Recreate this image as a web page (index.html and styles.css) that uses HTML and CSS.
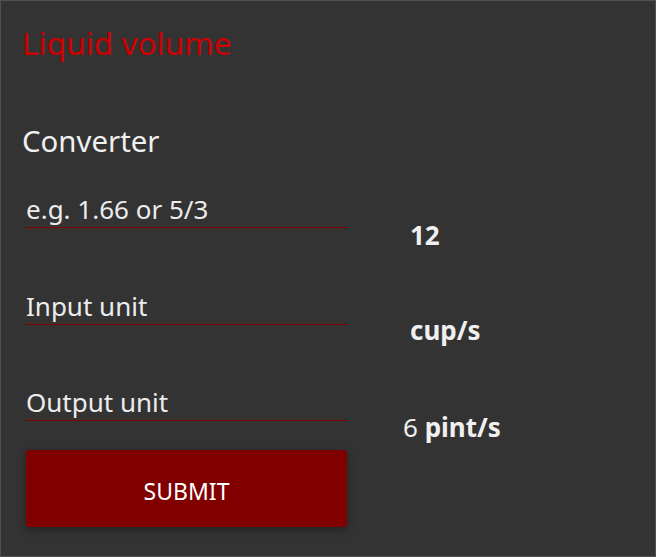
FILE: index.html
```html
<!DOCTYPE html>
<html>
<head>
<meta charset="utf-8">
<link rel="stylesheet" href="styles.css">
</head>
<body>
<div class="app">
  <h1 class="title">Liquid volume</h1>
  <h2 class="subtitle">Converter</h2>
  <div class="grid">
    <div class="field"><span class="placeholder">e.g. 1.66 or 5/3</span></div>
    <div class="value value-1 indent"><b>12</b></div>
    <div class="field"><span class="placeholder">Input unit</span></div>
    <div class="value value-2 indent"><b>cup/s</b></div>
    <div class="field field-last"><span class="placeholder">Output unit</span></div>
    <div class="value value-3">6 <b>pint/s</b></div>
    <button class="submit">SUBMIT</button>
  </div>
</div>
</body>
</html>
```

FILE: styles.css
```css
html, body {
  margin: 0;
  padding: 0;
}
body {
  width: 656px;
  height: 557px;
  box-sizing: border-box;
  background: #333333;
  border: 1px solid #505050;
  font-family: "Noto Sans", "Open Sans", sans-serif;
  color: #f0f0f0;
  overflow: hidden;
}
.app {
  padding: 22px 0 0 21px;
}
.title {
  margin: 0;
  font-size: 31.6px;
  line-height: 40px;
  font-weight: 400;
  color: #cc0000;
}
.subtitle {
  margin: 59px 0 0 0;
  font-size: 29.4px;
  line-height: 38px;
  font-weight: 400;
  color: #f0f0f0;
}
.grid {
  display: grid;
  grid-template-columns: 321px 1fr;
  column-gap: 56px;
  margin: 0 0 0 4px;
}
.field {
  height: 68px;
  box-sizing: border-box;
  border-bottom: 1px solid #800000;
  display: flex;
  align-items: flex-end;
  padding: 0 0 1px 0;
  margin-top: 29px;
  font-size: 26px;
  line-height: 34px;
  color: #ececec;
}
.field:first-child {
  margin-top: 0;
}
.field-last {
  margin-top: 28px;
}
.value {
  align-self: end;
  font-size: 26px;
  line-height: 34px;
  color: #f0f0f0;
}
.indent {
  padding-left: 7px;
}
.value-1 {
  transform: translateY(24px);
}
.value-2 {
  transform: translateY(22px);
}
.value-3 {
  transform: translateY(23px);
}
.value b {
  font-weight: 700;
}
.submit {
  grid-column: 1;
  margin-top: 29px;
  height: 77px;
  padding: 5px 0 0 0;
  border: none;
  border-radius: 3px;
  background: #800000;
  color: #ffffff;
  font-family: inherit;
  font-size: 23px;
  box-shadow: 0 3px 8px rgba(0, 0, 0, 0.35);
}
```
